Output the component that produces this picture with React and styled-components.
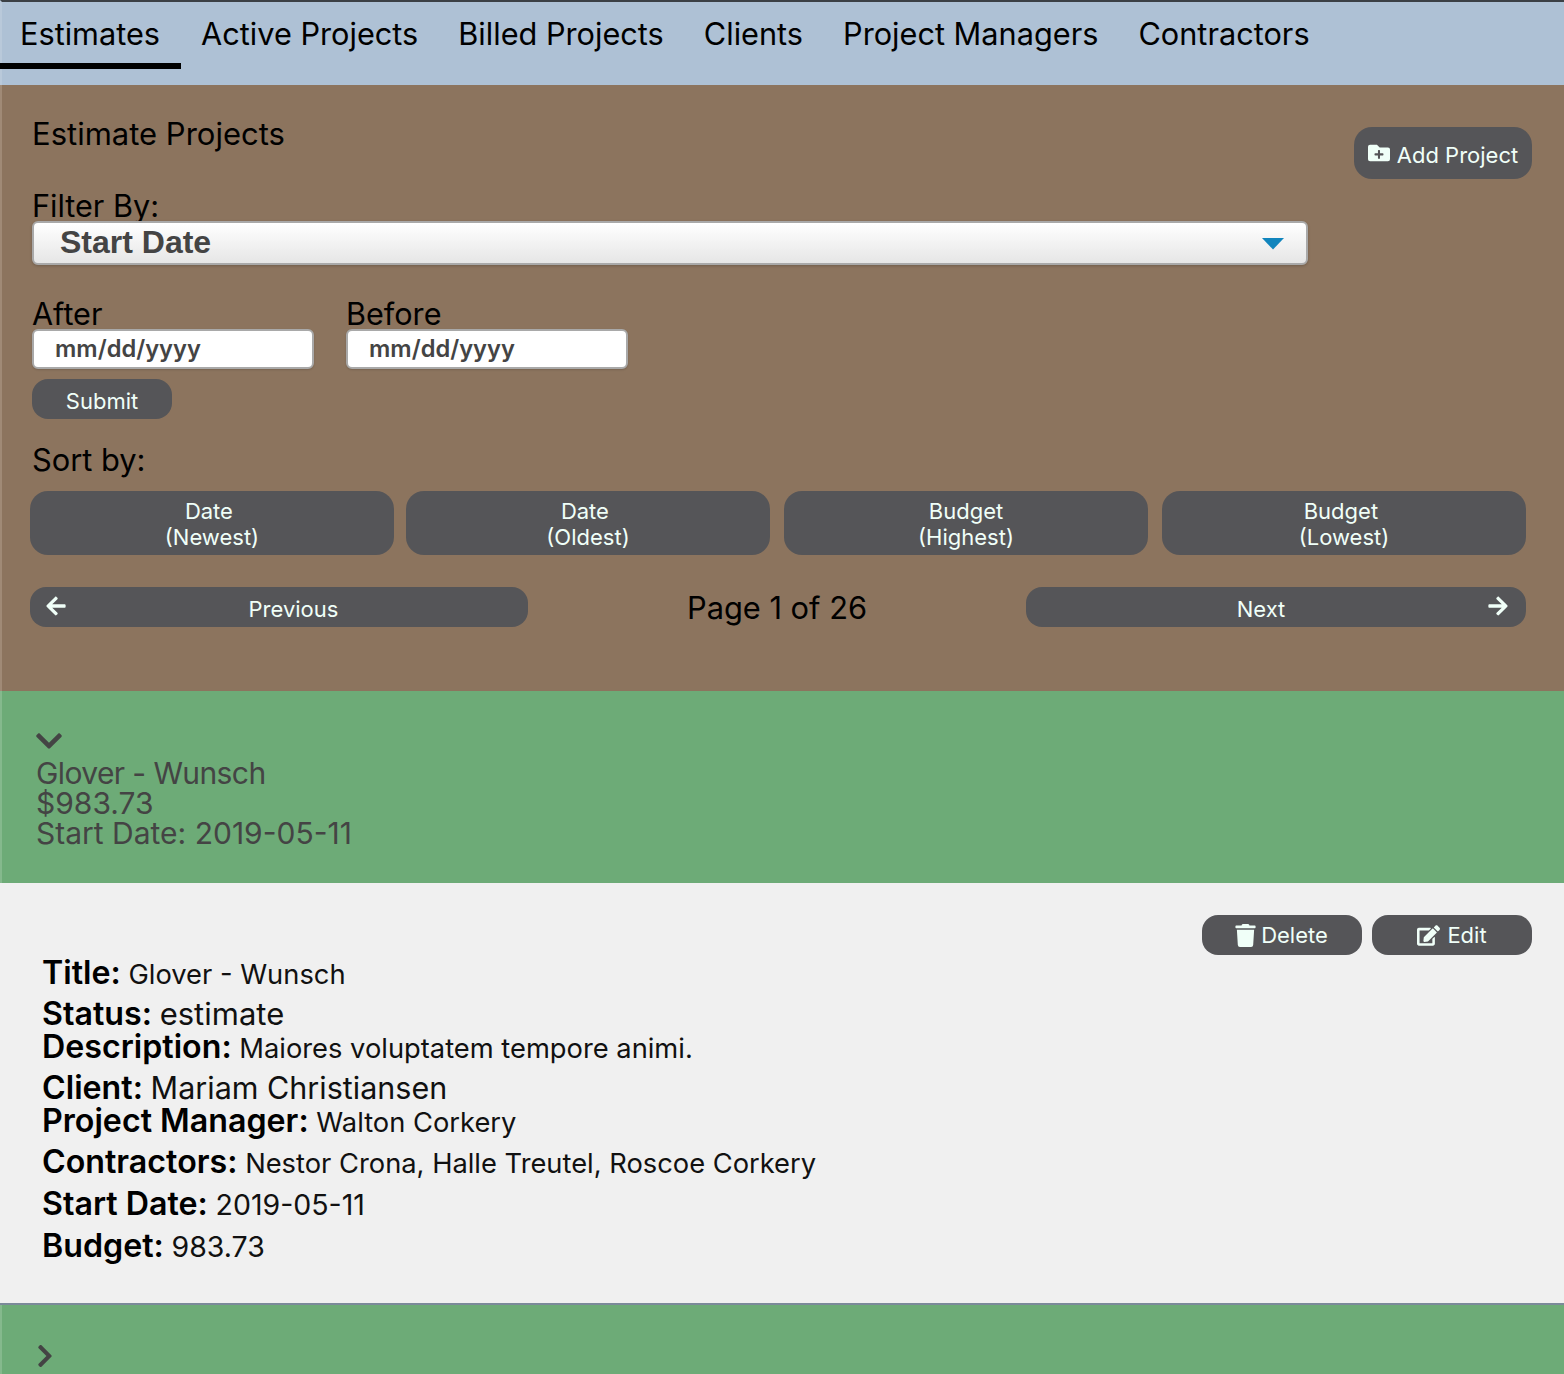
import React from "react";
import styled, { createGlobalStyle } from "styled-components";
import { FaFolderPlus, FaArrowLeft, FaArrowRight, FaTrash, FaEdit, FaChevronDown, FaChevronRight } from "react-icons/fa";

const Global = createGlobalStyle`
  html, body { margin: 0; padding: 0; background: #f0f0f0; }
  body { font-family: Inter, "Noto Sans", sans-serif; height: 1374px; overflow: hidden; color: #000; }
  * { box-sizing: border-box; }
`;

const Page = styled.div`
  width: 1564px;
  height: 1374px;
  overflow: hidden;
`;

const Nav = styled.nav`
  height: 85px;
  background: #aec1d5;
  border-top: 2px solid #3b4045;
  border-left: 2px solid #b9c9da;
  display: flex;
  align-items: flex-start;
`;

const Tab = styled.a`
  display: block;
  height: 67px;
  padding: 12px ${p => (p.$first ? "21px" : "20px")} 0 20px;
  font-size: 30.7px;
  line-height: 40px;
  color: #000;
  margin-left: ${p => (p.$first ? "-2px" : "0")};
  border-bottom: ${p => (p.$active ? "6px solid #000" : "none")};
`;

const Panel = styled.section`
  height: 606px;
  background: #8c745e;
  border-left: 2px solid #a08a76;
  padding: 29px 32px 0 30px;
  position: relative;
`;

const Heading = styled.h2`
  margin: 0;
  font-size: 31px;
  font-weight: 400;
  line-height: 40px;
`;

const PillButton = styled.button`
  border: none;
  background: #555558;
  color: #f0fff8;
  font-family: inherit;
  font-size: 22px;
  letter-spacing: 0;
  line-height: 26px;
  padding: 4px 0 0;
  display: flex;
  align-items: center;
  justify-content: center;
`;

const AddButton = styled(PillButton)`
  position: absolute;
  top: 42px;
  right: 32px;
  width: 178px;
  height: 52px;
  border-radius: 18px;
  gap: 7px;
  svg { width: 22px; height: 22px; margin-top: -4px; }
`;

const FieldLabel = styled.label`
  display: block;
  font-size: 30.6px;
  line-height: 30px;
  height: 30px;
`;

const FilterLabel = styled(FieldLabel)`
  margin-top: 37px;
`;

const SelectBox = styled.div`
  position: relative;
  width: 1276px;
  height: 44px;
`;

const Select = styled.select`
  appearance: none;
  width: 100%;
  height: 100%;
  border: 2px solid #a9a9a9;
  border-radius: 6px;
  background: linear-gradient(#ffffff, #e6e6e6);
  box-shadow: 0 1px 3px rgba(0,0,0,.2);
  color: #444;
  font-family: "Liberation Sans", Arial, sans-serif;
  font-weight: 700;
  font-size: 32px;
  padding: 0 0 2px 26px;
  margin: 0;
`;

const Caret = styled.svg`
  position: absolute;
  right: 23px;
  top: 16px;
  width: 24px;
  height: 13px;
  pointer-events: none;
`;

const DateRow = styled.div`
  display: flex;
  gap: 32px;
  margin-top: 34px;
`;

const DateField = styled.div`
  width: 282px;
`;

const DateInput = styled.input`
  display: block;
  width: 282px;
  height: 40px;
  border: 2px solid #a9a9a9;
  border-radius: 6px;
  background: #fff;
  color: #444;
  box-shadow: 0 1px 2px rgba(0,0,0,.15);
  font-family: inherit;
  font-weight: 600;
  font-size: 23.7px;
  padding: 0 0 2px 21px;
`;

const SubmitButton = styled(PillButton)`
  width: 140px;
  height: 40px;
  border-radius: 16px;
  margin-top: 10px;
`;

const SortLabel = styled.div`
  font-size: 30.8px;
  line-height: 40px;
  margin-top: 21px;
`;

const SortRow = styled.div`
  display: flex;
  gap: 14px;
  margin-top: 11px;
  margin-left: -2px;
`;

const SortButton = styled(PillButton)`
  width: 364px;
  height: 64px;
  border-radius: 18px;
  flex-direction: column;
  padding-top: 2px;
  &:first-child { margin-right: -2px; }
`;

const Pager = styled.div`
  display: flex;
  align-items: center;
  margin: 32px 6px 0 -2px;
`;

const PagerButton = styled(PillButton)`
  position: relative;
  height: 40px;
  width: ${p => p.$w}px;
  border-radius: 16px;
  ${p => (p.$side === "left" ? "padding-left: 29px;" : "padding-right: 30px;")}
  svg {
    position: absolute;
    top: 8px;
    width: 22px;
    height: 22px;
    ${p => (p.$side === "left" ? "left: 15px;" : "right: 17px;")}
  }
`;

const PageText = styled.div`
  flex: 1;
  text-align: center;
  font-size: 30.8px;
  line-height: 38px;
  height: 40px;
  padding-top: 2px;
`;

const Summary = styled.div`
  background: #6dab77;
  border-left: 2px solid #85b98d;
  height: ${p => p.$h}px;
  padding: 37px 0 0 34px;
  color: #444;
  font-size: 30px;
  line-height: 30px;
`;

const NameText = styled.div`
  letter-spacing: -0.6px;
`;

const Toggle = styled.div`
  display: flex;
  align-items: flex-start;
  height: 30px;
  svg { flex: none; width: 30px; height: 30px; color: #444; margin: -2px 0 0 -2px; }
`;

const ToggleRight = styled(Toggle)`
  svg { width: 26px; height: 26px; margin: 1px 0 0 -4px; }
`;

const Detail = styled.section`
  position: relative;
  height: 422px;
  background: #f0f0f0;
  border-bottom: 2px solid #7b8a99;
  padding: 73px 0 0 42px;
`;

const Actions = styled.div`
  position: absolute;
  top: 32px;
  right: 32px;
  display: flex;
  gap: 10px;
`;

const ActionButton = styled(PillButton)`
  width: 160px;
  height: 40px;
  border-radius: 16px;
  gap: ${p => p.$gap}px;
  padding: 0 ${p => (p.$gap < 7 ? "2px" : "0")} 0 0;
  svg { width: 23px; height: 23px; }
`;

const InfoGroup = styled.div`
  margin-bottom: ${p => p.$gap || 8}px;
`;

const Line = styled.div`
  height: 33px;
  font-size: 27.3px;
  line-height: 33px;
  color: #111;
  white-space: nowrap;
`;

const Label = styled.strong`
  font-size: 32.2px;
  font-weight: 600;
  color: #000;
`;

const Big = styled.span`
  font-size: ${p => p.$size}px;
`;

const sorts = [
  ["Date\u00a0", "(Newest)"],
  ["Date\u00a0", "(Oldest)"],
  ["Budget", "(Highest)"],
  ["Budget\u00a0", "(Lowest)"],
];

const tabs = ["Estimates", "Active Projects", "Billed Projects", "Clients", "Project Managers", "Contractors"];

export default function App() {
  return (
    <Page>
      <Global />
      <Nav>
        {tabs.map((t, i) => (
          <Tab key={t} $active={i === 0} $first={i === 0}>{t}</Tab>
        ))}
      </Nav>
      <Panel>
        <Heading>Estimate Projects</Heading>
        <AddButton><FaFolderPlus />Add Project</AddButton>
        <FilterLabel>Filter By:</FilterLabel>
        <SelectBox>
          <Select defaultValue="start"><option value="start">Start Date</option></Select>
          <Caret viewBox="0 0 24 13"><path d="M1 1h22L12 12.5z" fill="#1185bd" /></Caret>
        </SelectBox>
        <DateRow>
          <DateField>
            <FieldLabel>After</FieldLabel>
            <DateInput readOnly value="mm/dd/yyyy" />
          </DateField>
          <DateField>
            <FieldLabel>Before</FieldLabel>
            <DateInput readOnly value="mm/dd/yyyy" />
          </DateField>
        </DateRow>
        <SubmitButton>Submit</SubmitButton>
        <SortLabel>Sort by:</SortLabel>
        <SortRow>
          {sorts.map(([a, b]) => (
            <SortButton key={a + b}><span>{a}</span><span>{b}</span></SortButton>
          ))}
        </SortRow>
        <Pager>
          <PagerButton $w={498} $side="left"><FaArrowLeft />Previous</PagerButton>
          <PageText>Page 1 of 26</PageText>
          <PagerButton $w={500} $side="right">Next<FaArrowRight /></PagerButton>
        </Pager>
      </Panel>
      <Summary $h={192}>
        <Toggle><FaChevronDown /></Toggle>
        <NameText>Glover - Wunsch</NameText>
        <div>$983.73</div>
        <div>Start Date: 2019-05-11</div>
      </Summary>
      <Detail>
        <Actions>
          <ActionButton $gap={4}><FaTrash />Delete</ActionButton>
          <ActionButton $gap={7}><FaEdit />Edit</ActionButton>
        </Actions>
        <InfoGroup><Line><Label>Title:</Label> Glover - Wunsch</Line></InfoGroup>
        <InfoGroup>
          <Line><Label>Status:</Label> <Big $size={31}>estimate</Big></Line>
          <Line><Label>Description:</Label> Maiores voluptatem tempore animi.</Line>
        </InfoGroup>
        <InfoGroup>
          <Line><Label>Client:</Label> <Big $size={30.5}>Mariam Christiansen</Big></Line>
          <Line><Label>Project Manager:</Label> Walton Corkery</Line>
        </InfoGroup>
        <InfoGroup $gap={9}><Line><Label>Contractors:</Label> Nestor Crona, Halle Treutel, Roscoe Corkery</Line></InfoGroup>
        <InfoGroup $gap={9}><Line><Label>Start Date:</Label> <Big $size={28.5}>2019-05-11</Big></Line></InfoGroup>
        <InfoGroup><Line><Label>Budget:</Label> <Big $size={28.5}>983.73</Big></Line></InfoGroup>
      </Detail>
      <Summary $h={80}>
        <ToggleRight><FaChevronRight /></ToggleRight>
      </Summary>
    </Page>
  );
}
